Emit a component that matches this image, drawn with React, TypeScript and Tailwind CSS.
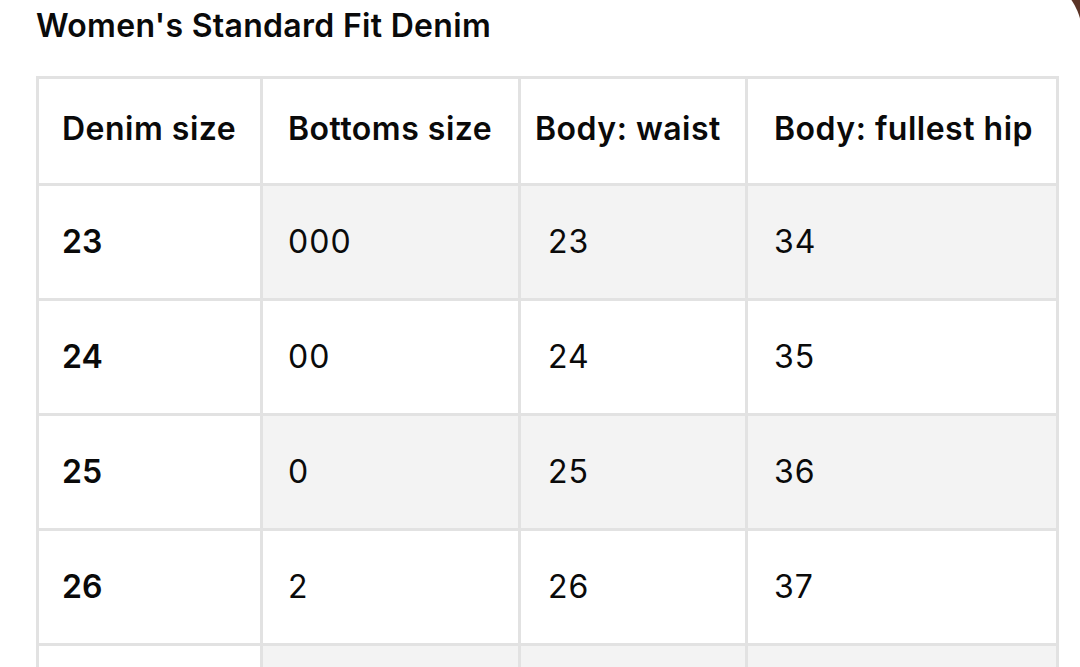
const HEADERS = ['Denim size', 'Bottoms size', 'Body: waist', 'Body: fullest hip'];

const ROWS: string[][] = [
  ['23', '000', '23', '34'],
  ['24', '00', '24', '35'],
  ['25', '0', '25', '36'],
  ['26', '2', '26', '37'],
];

// header cell padding; the waist column header sits a bit further left in the reference
const HEAD_PAD = ['pl-[23px]', 'pl-[25px]', 'pl-[14px]', 'pl-[26px]'];
const CELL_PAD = ['pl-[23px]', 'pl-[25px]', 'pl-[27px]', 'pl-[26px]'];

export default function App() {
  return (
    <div
      className="h-[667px] w-[1080px] overflow-hidden bg-[linear-gradient(90deg,#e6e6e6_0%,#e6e6e6_50%,#5a3326_50%,#5a3326_100%)]"
      style={{ fontFamily: 'Inter, "Noto Sans", sans-serif' }}
    >
      <div className="-mt-[26px] h-[720px] w-[1082px] rounded-tr-[60px] rounded-tl-[8px] bg-white pl-[36px] pt-[32px] text-[#0a0a0a]">
        <h1 className="text-[32px] font-semibold leading-[40px] tracking-[0.3px]">Women's Standard Fit Denim</h1>

        <div className="mt-[30px] grid w-[1023px] grid-cols-[221px_255px_224px_308px] gap-[3px] bg-[#e2e2e2] p-[3px]">
          {HEADERS.map((h, i) => (
            <div
              key={h}
              className={`flex h-[104px] items-center bg-white pb-[4px] text-[32px] font-semibold tracking-[0.5px] ${HEAD_PAD[i]}`}
            >
              {h}
            </div>
          ))}

          {ROWS.map((row, r) =>
            row.map((cell, c) => (
              <div
                key={`${r}-${c}`}
                className={`flex h-[112px] items-center text-[32px] ${CELL_PAD[c]} ${
                  c === 0 ? 'bg-white font-semibold' : r % 2 === 0 ? 'bg-[#f3f3f3] font-normal tracking-[1px]' : 'bg-white font-normal tracking-[1px]'
                }`}
              >
                {cell}
              </div>
            ))
          )}

          {/* next row, cut off by the bottom of the window */}
          <div className="h-[112px] bg-white" />
          <div className="h-[112px] bg-[#f3f3f3]" />
          <div className="h-[112px] bg-[#f3f3f3]" />
          <div className="h-[112px] bg-[#f3f3f3]" />
        </div>
      </div>
    </div>
  );
}
